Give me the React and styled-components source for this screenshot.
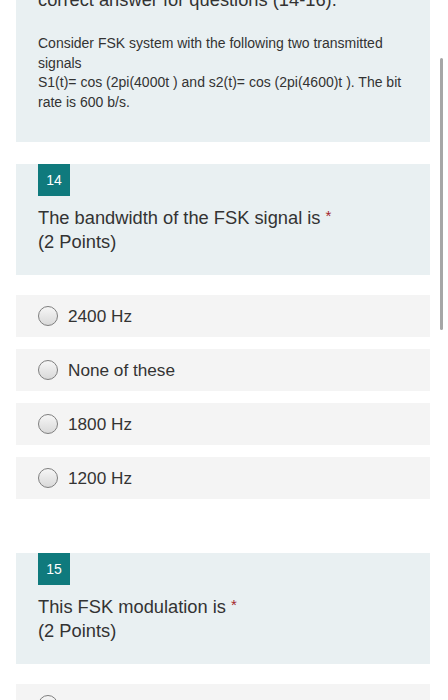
import React from "react";
import styled, { createGlobalStyle } from "styled-components";

const GlobalStyle = createGlobalStyle`
  html, body {
    margin: 0;
    padding: 0;
    background: #ffffff;
    font-family: "Liberation Sans", Arial, sans-serif;
    color: #333333;
  }
`;

//Data
const questions = [
  {
    number: 14,
    title: "The bandwidth of the FSK signal is",
    points: 2,
    options: ["2400 Hz", "None of these", "1800 Hz", "1200 Hz"],
  },
  {
    number: 15,
    title: "This FSK modulation is",
    points: 2,
    options: [""],
  },
];

const App = () => {
  return (
    <>
      <GlobalStyle />
      <Page>
        <IntroCard>
          <IntroTitle>correct answer for questions (14-16).</IntroTitle>
          <IntroText>
            Consider FSK system with the following two transmitted
            <br />
            signals
            <br />
            S1(t)= cos (2pi(4000t ) and s2(t)= cos (2pi(4600)t ). The bit rate
            is 600 b/s.
          </IntroText>
        </IntroCard>
        {questions.map((q) => (
          <Question key={q.number}>
            <QuestionCard>
              <Badge>{q.number}</Badge>
              <QuestionTitle>
                {q.title} <Required>*</Required>
                <br />({q.points} Points)
              </QuestionTitle>
            </QuestionCard>
            <Options>
              {q.options.map((opt, i) => (
                <Option key={i}>
                  <Radio />
                  <OptionLabel>{opt}</OptionLabel>
                </Option>
              ))}
            </Options>
          </Question>
        ))}
      </Page>
      <Scrollbar />
    </>
  );
};

const Page = styled.div`
  display: flex;
  flex-direction: column;
  padding: 0 18px 40px 16px;
  margin-top: -12px;
  height: 760px;
  overflow: hidden;
`;

const IntroCard = styled.div`
  background: #e9f0f2;
  padding: 0 22px 30px 22px;
`;

const IntroTitle = styled.div`
  font-size: 18.3px;
  line-height: 24px;
  color: #333333;
  white-space: nowrap;
`;

const IntroText = styled.p`
  margin: 22px 0 0 0;
  font-size: 14px;
  line-height: 19.5px;
  color: #333333;
`;

const Question = styled.div`
  display: flex;
  flex-direction: column;
  gap: 20px;
  margin-top: 22px;
  & + & {
    margin-top: 54px;
  }
`;

const QuestionCard = styled.div`
  background: #e9f0f2;
  padding: 0 22px 21px 22px;
`;

const Badge = styled.div`
  width: 32px;
  height: 32px;
  background: #0f7a7d;
  color: #ffffff;
  font-size: 14px;
  display: flex;
  align-items: center;
  justify-content: center;
`;

const QuestionTitle = styled.div`
  margin-top: 10px;
  font-size: 18.3px;
  line-height: 24px;
  color: #333333;
`;

const Required = styled.span`
  color: #a4262c;
  font-size: 15px;
  vertical-align: top;
  position: relative;
  top: -2px;
`;

const Options = styled.div`
  display: flex;
  flex-direction: column;
  gap: 12px;
`;

const Option = styled.div`
  display: flex;
  align-items: center;
  gap: 10px;
  height: 42px;
  padding: 0 22px;
  background: #f4f4f4;
`;

const Radio = styled.span`
  width: 18px;
  height: 18px;
  border-radius: 50%;
  border: 1px solid #7f7f7f;
  background: linear-gradient(180deg, #f6f6f6 0%, #d9d9d9 100%);
  box-sizing: content-box;
  flex-shrink: 0;
`;

const OptionLabel = styled.span`
  font-size: 17.2px;
  color: #333333;
`;

const Scrollbar = styled.div`
  position: fixed;
  top: 58px;
  right: 5px;
  width: 3px;
  height: 272px;
  border-radius: 2px;
  background: #a6a6a6;
`;

export default App;
